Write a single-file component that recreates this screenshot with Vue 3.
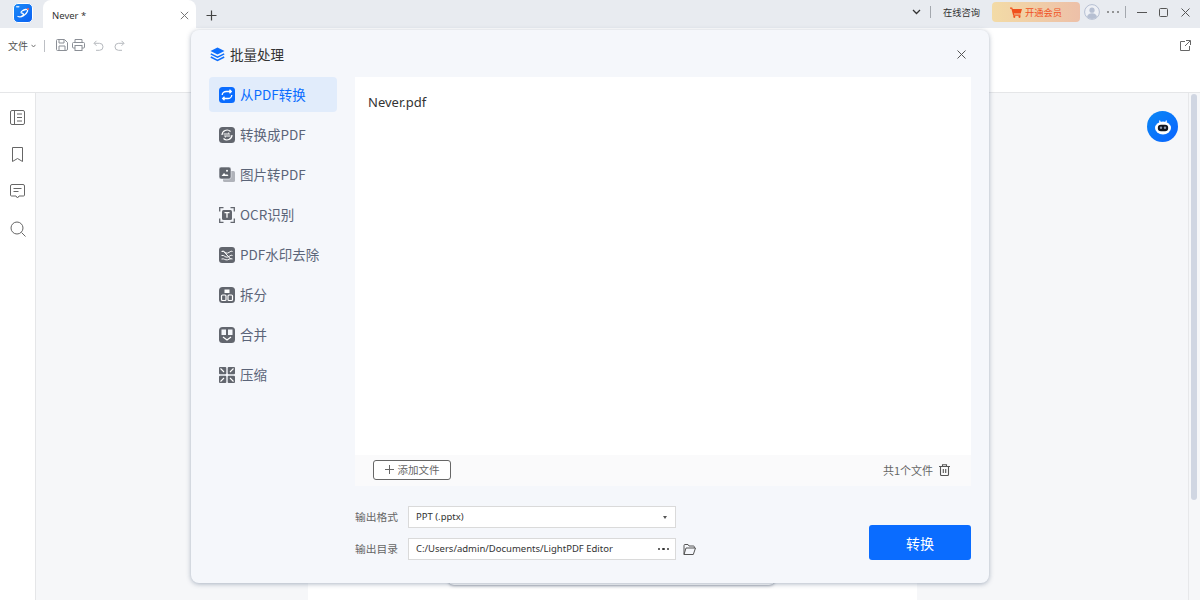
<script setup>
const navItems = [
  { label: '从PDF转换', icon: 'from', active: true },
  { label: '转换成PDF', icon: 'to' },
  { label: '图片转PDF', icon: 'img' },
  { label: 'OCR识别', icon: 'ocr' },
  { label: 'PDF水印去除', icon: 'mark' },
  { label: '拆分', icon: 'split' },
  { label: '合并', icon: 'merge' },
  { label: '压缩', icon: 'zip' }
]
</script>

<template>
  <div class="app">
    <header class="titlebar">
      <div class="logo">
        <svg width="20" height="20" viewBox="0 0 20 20">
          <defs>
            <linearGradient id="logoFill" x1="0" y1="0" x2="1" y2="1">
              <stop offset="0" stop-color="#1c8cf8" />
              <stop offset="1" stop-color="#0a5ff2" />
            </linearGradient>
          </defs>
          <rect x=".5" y=".5" width="19" height="19" rx="4.500" fill="url(#logoFill)" stroke="#fff" />
          <rect x="3" y="3" width="3.500" height="1.500" rx=".7" fill="#cfe4ff" />
          <path d="M5 13.500c3.500 1.200 8-1.500 9.500-5.300.4-1.300-.6-2-1.900-1.700-2.200.5-4.800 1.800-4.500 3 .3 1 2.400.4 2.300 1.700-.1.900-1 1.700-2.100 2.100" fill="none" stroke="#fff" stroke-width="1.300" stroke-linecap="round" />
          <circle cx="15" cy="6" r="1" fill="#f3655a" />
        </svg>
      </div>
      <div class="tab">
        <span class="tab-name">Never *</span>
        <svg class="tab-close" width="9" height="9" viewBox="0 0 9 9"><path d="M.8.8l7.400 7.400M8.200.8L.8 8.200" stroke="#777" stroke-width="1" /></svg>
      </div>
      <svg class="tab-add" width="11" height="11" viewBox="0 0 11 11"><path d="M5.500.5v10M.5 5.500h10" stroke="#444" stroke-width="1.200" /></svg>
      <div class="title-right">
        <svg class="chev" width="9" height="6" viewBox="0 0 9 6"><path d="M1 1l3.500 3.500L8 1" fill="none" stroke="#333" stroke-width="1.300" /></svg>
        <i class="vline first"></i>
        <span class="consult">在线咨询</span>
        <div class="vip">
          <svg width="12" height="11" viewBox="0 0 12 11"><path d="M0 .6h2.200l.5 1.400H12l-1.300 4.600H3.900l.3 1H10.500v1.200H3.200L1.400 1.800H0z" fill="#f0501c" /><circle cx="4.300" cy="9.800" r="1.100" fill="#f0501c" /><circle cx="9.500" cy="9.800" r="1.100" fill="#f0501c" /></svg>
          <span>开通会员</span>
        </div>
        <svg class="avatar" width="16" height="16" viewBox="0 0 16 16"><circle cx="8" cy="8" r="7.400" fill="#eef0f5" stroke="#b6bfd2" /><circle cx="8" cy="6.200" r="2.600" fill="#b6bfd2" /><path d="M3 13c.8-2.800 2.600-3.800 5-3.800s4.200 1 5 3.800a7 7 0 0 1-10 0z" fill="#b6bfd2" /></svg>
        <span class="dots"><b></b><b></b><b></b></span>
        <i class="vline second"></i>
        <svg class="win-min" width="10" height="1" viewBox="0 0 10 1"><path d="M0 .5h10" stroke="#555" /></svg>
        <svg class="win-max" width="9" height="9" viewBox="0 0 9 9"><rect x=".5" y=".5" width="8" height="8" rx="1" fill="none" stroke="#555" /></svg>
        <svg class="win-close" width="9" height="9" viewBox="0 0 9 9"><path d="M.5.500l8 8M8.500.5l-8 8" stroke="#555" /></svg>
      </div>
    </header>

    <div class="toolbar">
      <span class="file-menu">文件</span>
      <svg class="file-chev" width="5" height="4" viewBox="0 0 5 4"><path d="M.5.800L2.500 3l2-2.200" fill="none" stroke="#666" stroke-width=".9" /></svg>
      <i class="tool-line"></i>
      <svg class="t-save" width="12" height="12" viewBox="0 0 12 12"><path d="M1.500.5h7l3 3v6.500a1.500 1.500 0 0 1-1.500 1.500H1.500A1 1 0 0 1 .5 10.500v-9a1 1 0 0 1 1-1z" fill="none" stroke="#8b8f96" /><path d="M3 1v3h5V1M3 11V7h6v4" fill="none" stroke="#8b8f96" /></svg>
      <svg class="t-print" width="13" height="12" viewBox="0 0 13 12"><path d="M3 3.500V.5h7v3M3 9H1.500a1 1 0 0 1-1-1V4.500a1 1 0 0 1 1-1h10a1 1 0 0 1 1 1V8a1 1 0 0 1-1 1H10" fill="none" stroke="#8b8f96" /><rect x="3" y="6.500" width="7" height="5" fill="none" stroke="#8b8f96" /></svg>
      <svg class="t-undo" width="11" height="11" viewBox="0 0 11 11"><path d="M3.500.8L1 3.300l2.500 2.500M1.200 3.300h5.300a3.500 3.500 0 0 1 0 7H3" fill="none" stroke="#b5b8bd" /></svg>
      <svg class="t-redo" width="11" height="11" viewBox="0 0 11 11"><path d="M7.500.8L10 3.300 7.500 5.800M9.800 3.300H4.500a3.500 3.500 0 0 0 0 7H8" fill="none" stroke="#b5b8bd" /></svg>
      <svg class="t-open" width="11" height="11" viewBox="0 0 11 11"><path d="M5 1.500H.5v9h9V6M6 .5h4.500V5M10.200.8L5 6" fill="none" stroke="#666" /></svg>
    </div>

    <div class="workspace">
      <aside class="rail">
        <svg width="15" height="15" viewBox="0 0 15 15"><rect x=".5" y=".5" width="14" height="14" rx="1.500" fill="none" stroke="#666" /><path d="M4.500 1v13M7 4h5M7 7.500h5M7 11h5" stroke="#666" fill="none" /></svg>
        <svg width="15" height="15" viewBox="0 0 15 15"><path d="M2.500.5h10v14l-5-3-5 3z" fill="none" stroke="#666" /></svg>
        <svg width="15" height="15" viewBox="0 0 15 15"><path d="M2 .5h11A1.500 1.500 0 0 1 14.500 2v9a1 1 0 0 1-1 1H9l-1.500 2L6 12H1.500a1 1 0 0 1-1-1V2A1.500 1.500 0 0 1 2 .5z" fill="none" stroke="#666" /><path d="M3.500 4.500h8M3.500 7.500h5" stroke="#666" /></svg>
        <svg width="16" height="16" viewBox="0 0 16 16"><circle cx="7" cy="7" r="6" fill="none" stroke="#666" /><path d="M11.500 11.500l4 4" stroke="#666" /></svg>
      </aside>
      <main class="canvas">
        <div class="page"></div>
        <div class="float-bar"></div>
        <div class="bot">
          <svg width="18" height="17" viewBox="0 0 18 17"><path d="M6.200 4.500L5.700 3M11.800 4.500l.5-1.500" stroke="#fff" stroke-width="1.300" stroke-linecap="round" /><ellipse cx="9" cy="10" rx="8" ry="6.500" fill="#fff" /><rect x="3.800" y="6.800" width="10.400" height="6.400" rx="3.200" fill="#11151d" /><circle cx="7" cy="9.700" r="1.200" fill="#8a93a5" /><circle cx="11" cy="9.700" r="1.200" fill="#8a93a5" /></svg>
        </div>
      </main>
      <div class="scroll"><div class="thumb"></div></div>
    </div>

    <section class="modal">
      <div class="modal-head">
        <svg width="15" height="15" viewBox="0 0 15 15"><path d="M7.500.5L14.500 4l-7 3.500L.5 4z" fill="#0d6efd" /><path d="M.8 6.800l6.700 3.300 6.700-3.300M.8 10l6.700 3.500L14.200 10" fill="none" stroke="#0d6efd" stroke-width="1.500" /></svg>
        <h2>批量处理</h2>
        <svg class="modal-close" width="9" height="9" viewBox="0 0 9 9"><path d="M.5.500l8 8M8.500.5l-8 8" stroke="#555" stroke-width="1" /></svg>
      </div>
      <div class="modal-body">
        <nav class="nav">
          <div v-for="item in navItems" :key="item.label" class="nav-item" :class="{ active: item.active }">
            <svg class="nav-icon" width="16" height="16" viewBox="0 0 16 16">
              <template v-if="item.icon === 'from'">
                <rect width="16" height="16" rx="3.500" fill="#0a6cff" />
                <path d="M3.200 8a4 3.600 0 0 1 4-3.500h5M10.500 2.800L12.300 4.500 10.500 6.200M12.800 8a4 3.600 0 0 1-4 3.500h-5M5.500 9.800L3.700 11.500 5.500 13.200" fill="none" stroke="#fff" stroke-width="1.300" />
              </template>
              <template v-else-if="item.icon === 'to'">
                <rect width="16" height="16" rx="3.500" fill="#62666e" />
                <path d="M3 8a5 5 0 0 1 8.500-3.500M13 8a5 5 0 0 1-8.500 3.500" fill="none" stroke="#fff" stroke-width="1.200" />
                <path d="M4.500 7h6l-1.500-1.300M11.500 9h-6L7 10.300" fill="none" stroke="#fff" stroke-width="1" />
              </template>
              <template v-else-if="item.icon === 'img'">
                <rect x="4" y="4" width="12" height="11" rx="1.500" fill="#b0b3ba" />
                <rect width="12" height="12" rx="2" fill="#62666e" stroke="#f5f7fb" stroke-width=".6" />
                <path d="M2.500 9l2.500-3 2 2 1-1 1.500 2z" fill="#fff" />
                <circle cx="8" cy="3.700" r="1" fill="#fff" />
              </template>
              <template v-else-if="item.icon === 'ocr'">
                <path d="M.7 4.500V.7h3.800M11.500.7h3.800v3.800M.7 11.500v3.800h3.800M11.500 15.300h3.800v-3.800" fill="none" stroke="#62666e" stroke-width="1.300" />
                <rect x="3" y="3" width="10" height="10" rx="1.500" fill="#62666e" />
                <path d="M5.500 5.700h5M8 5.700v5" stroke="#fff" stroke-width="1.300" />
              </template>
              <template v-else-if="item.icon === 'mark'">
                <rect width="16" height="16" rx="3" fill="#62666e" />
                <path d="M2.500 4.500c3-.8 3.500 2.300 6 1.600s3-2.600 5-1.600M2.500 8.500c3-.8 3.500 2.300 6 1.600s3-2.600 5-1.600M2.500 12c3-.8 3.500 1.500 6 .8s3-1.800 5-.8M4 3.500l8 9" fill="none" stroke="#fff" stroke-width="1" />
              </template>
              <template v-else-if="item.icon === 'split'">
                <rect width="16" height="16" rx="3.500" fill="#62666e" />
                <rect x="5.500" y="2.500" width="5" height="3.500" fill="#fff" />
                <rect x="2.500" y="8" width="4.500" height="5.500" rx="1" fill="none" stroke="#fff" stroke-width="1.200" />
                <rect x="9" y="8" width="4.500" height="5.500" rx="1" fill="none" stroke="#fff" stroke-width="1.200" />
              </template>
              <template v-else-if="item.icon === 'merge'">
                <rect width="16" height="16" rx="3.500" fill="#62666e" />
                <rect x="2.500" y="2.500" width="4.500" height="5.500" fill="#f5f7fb" />
                <rect x="9" y="2.500" width="4.500" height="5.500" fill="#f5f7fb" />
                <path d="M4 10l4 3 4-3" fill="none" stroke="#fff" stroke-width="1.200" />
              </template>
              <template v-else>
                <rect width="7.300" height="7.300" rx="1" fill="#62666e" />
                <rect x="8.700" width="7.300" height="7.300" rx="1" fill="#62666e" />
                <rect y="8.700" width="7.300" height="7.300" rx="1" fill="#62666e" />
                <rect x="8.700" y="8.700" width="7.300" height="7.300" rx="1" fill="#62666e" />
                <path d="M1.500 1.500L5 5M14.500 1.500L11 5M1.500 14.500L5 11M14.500 14.500L11 11" stroke="#fff" stroke-width="1.100" />
              </template>
            </svg>
            <span class="nav-label">{{ item.label }}</span>
          </div>
        </nav>
        <div class="content">
          <div class="file-panel">
            <div class="file-list"><div class="file-name">Never.pdf</div></div>
            <div class="file-foot">
              <button class="add-btn">
                <svg width="9" height="9" viewBox="0 0 9 9"><path d="M4.500 0v9M0 4.500h9" stroke="#666" /></svg>
                <span>添加文件</span>
              </button>
              <div class="count">
                <span>共1个文件</span>
                <svg width="11" height="12" viewBox="0 0 11 12"><path d="M0 2.500h11M3.500 2.500V.7h4v1.800M1.500 2.500v8a1 1 0 0 0 1 1h6a1 1 0 0 0 1-1v-8M4.300 5v4M6.700 5v4" fill="none" stroke="#555" stroke-width="1.100" /></svg>
              </div>
            </div>
          </div>
          <div class="output">
            <div class="fields">
              <div class="field">
                <label>输出格式</label>
                <div class="input">
                  <span class="value">PPT (.pptx)</span>
                  <i class="caret"></i>
                </div>
              </div>
              <div class="field">
                <label>输出目录</label>
                <div class="input">
                  <span class="value">C:/Users/admin/Documents/LightPDF Editor</span>
                  <span class="more"><b></b><b></b><b></b></span>
                </div>
                <svg class="folder" width="13" height="11" viewBox="0 0 13 11"><path d="M1 10.500V1.500A1 1 0 0 1 2 .5h3l1 1.500h4.500a.8.8 0 0 1 .8.8V4M1 10.500h9.300L12.500 4H3z" fill="none" stroke="#555" /></svg>
              </div>
            </div>
            <button class="convert">转换</button>
          </div>
        </div>
      </div>
    </section>
  </div>
</template>

<style>
html, body { margin: 0; padding: 0; overflow: hidden; }
</style>

<style scoped>
* { box-sizing: border-box; }
.app {
  position: relative;
  width: 1200px;
  height: 600px;
  display: flex;
  flex-direction: column;
  overflow: hidden;
  background: #fff;
  font-family: "Noto Sans CJK SC", "Noto Sans", sans-serif;
  color: #333;
}
.titlebar {
  height: 28px;
  flex: none;
  display: flex;
  align-items: center;
  background: #e8ebf0;
  padding-left: 13px;
}
.logo { width: 20px; height: 20px; margin-top: -2px; line-height: 0; }
.tab {
  width: 153px;
  height: 28px;
  margin-left: 10px;
  background: #fff;
  border-radius: 8px 8px 0 0;
  display: flex;
  align-items: center;
  justify-content: space-between;
  padding: 2px 7px 0 9px;
  font-size: 9.500px;
  color: #333;
}
.tab-name { font-family: "Noto Sans", sans-serif; }
.tab-add { margin-left: 10px; margin-top: 2px; }
.title-right {
  margin-left: auto;
  display: flex;
  align-items: center;
  height: 100%;
  padding-right: 10px;
  padding-bottom: 4px;
}
.chev { margin-right: 9px; margin-left: 0; }
.vline { width: 1px; height: 12px; background: #a4a8ae; }
.consult { margin-left: 12px; width: 37px; font-size: 9.250px; white-space: nowrap; color: #333; }
.vip {
  margin-left: 12px;
  width: 88px;
  height: 20px;
  border-radius: 4px;
  background: linear-gradient(90deg, #f3dba6, #edc0a8);
  display: flex;
  align-items: center;
  justify-content: center;
  gap: 3px;
  color: #f0511e;
  font-size: 9.250px;
}
.avatar { margin-left: 4px; }
.dots { margin-left: 7px; display: flex; gap: 3px; }
.dots b { width: 2px; height: 2px; border-radius: 50%; background: #777; }
.vline.second { margin-left: 6px; }
.win-min { margin-left: 11px; }
.win-max { margin-left: 12px; }
.win-close { margin-left: 13px; }

.toolbar {
  height: 65px;
  flex: none;
  background: #fff;
  border-bottom: 1px solid #e5e6e8;
  display: flex;
  align-items: flex-start;
  padding: 11px 9px 0 8px;
}
.file-menu { font-size: 10px; line-height: 14px; color: #555; }
.file-chev { margin: 5px 0 0 3px; }
.tool-line { width: 1px; height: 12px; margin-top: 1px; background: #bcbfc4; margin-left: 8px; }
.t-save { margin-left: 11px; }
.t-print { margin-left: 4px; }
.t-undo { margin-left: 8px; margin-top: 1px; }
.t-redo { margin-left: 10px; margin-top: 1px; }
.t-open { margin-left: auto; margin-top: 1px; }

.workspace { flex: 1; display: flex; min-height: 0; }
.rail {
  width: 36px;
  flex: none;
  background: #fff;
  border-right: 1px solid #e5e6e8;
  display: flex;
  flex-direction: column;
  align-items: flex-start;
  padding: 17px 0 0 10px;
  gap: 22px;
}
.canvas {
  position: relative;
  flex: 1;
  background: #f6f7f9;
  border-right: 1px solid #e7e8ea;
}
.page { width: 609px; height: 560px; margin: 20px 0 0 272px; background: #fff; }
.float-bar {
  position: absolute;
  left: 412px;
  top: 440px;
  width: 327px;
  height: 52px;
  border-radius: 6px;
  background: #fff;
  box-shadow: 0 1px 3px rgba(70, 80, 100, .5);
}
.bot {
  position: absolute;
  left: 1111px;
  top: 18px;
  width: 31px;
  height: 31px;
  border-radius: 50%;
  background: linear-gradient(135deg, #0a88f5, #0a63ff);
  display: flex;
  align-items: center;
  justify-content: center;
}
.scroll { width: 11px; flex: none; background: #f6f7f9; padding: 1px 3px 0 2px; }
.thumb { height: 406px; border-radius: 4px; background: #d0d6e2; }

.modal {
  position: absolute;
  left: 191px;
  top: 30px;
  width: 798px;
  height: 553px;
  border-radius: 8px;
  background: #f5f7fb;
  box-shadow: 0 1px 5px rgba(70, 90, 120, .45);
  display: flex;
  flex-direction: column;
}
.modal-head {
  height: 47px;
  flex: none;
  display: flex;
  align-items: center;
  padding: 1px 23px 0 19px;
}
.modal-head h2 { margin: 0 0 0 5px; font-size: 13.500px; font-weight: 400; color: #333; }
.modal-close { margin-left: auto; }
.modal-body { flex: 1; display: flex; min-height: 0; padding: 0 18px 0 18px; }
.nav { width: 128px; flex: none; }
.nav-item {
  height: 35px;
  margin-bottom: 5px;
  display: flex;
  align-items: center;
  gap: 5px;
  padding: 0 10px;
  border-radius: 4px;
  font-size: 13.500px;
  color: #5b6478;
}
.nav-label { margin-top: -2px; }
.nav-item.active { background: #e1ecfb; color: #0a6cff; }
.nav-icon { flex: none; margin-top: 0; }
.content { margin-left: 18px; width: 616px; display: flex; flex-direction: column; }
.file-panel { height: 409px; flex: none; display: flex; flex-direction: column; background: #fff; }
.file-list { flex: 1; padding: 15px 13px; }
.file-name { font-size: 13px; line-height: 20px; color: #333; font-family: "Noto Sans", sans-serif; }
.file-foot {
  height: 31px;
  flex: none;
  background: #fafafb;
  display: flex;
  align-items: center;
  justify-content: space-between;
  padding: 0 21px 0 18px;
}
.add-btn {
  width: 78px;
  height: 20px;
  margin-top: -2px;
  padding: 0;
  border: 1px solid #666;
  border-radius: 3px;
  background: #fff;
  display: flex;
  align-items: center;
  justify-content: center;
  gap: 4px;
  font: 10.500px "Noto Sans CJK SC", sans-serif;
  color: #666;
}
.count { display: flex; align-items: center; gap: 6px; font-size: 11px; color: #666; margin-top: -2px; }
.output { flex: 1; display: flex; align-items: flex-start; justify-content: space-between; }
.fields { padding-top: 20px; display: flex; flex-direction: column; gap: 10px; }
.field { display: flex; align-items: center; height: 22px; position: relative; }
.field label { width: 53px; font-size: 10.750px; margin-top: -2px; color: #666; white-space: nowrap; }
.input {
  width: 268px;
  height: 22px;
  background: #fff;
  border: 1px solid #dadada;
  display: flex;
  align-items: center;
  justify-content: space-between;
  padding: 0 6px 0 7px;
  font-size: 9.500px;
  color: #333;
}
.value { font-family: "Noto Sans", sans-serif; margin-top: -1px; }
.caret { width: 0; height: 0; border: 2.500px solid transparent; border-top: 3px solid #555; border-bottom: 0; margin-right: 2px; }
.more { display: flex; gap: 2px; margin-right: 0; }
.more b { width: 2.500px; height: 2.500px; border-radius: 50%; background: #333; }
.folder { margin-left: 7px; }
.convert {
  width: 102px;
  height: 35px;
  margin-top: 39px;
  border: 0;
  border-radius: 3px;
  background: #0a6cff;
  color: #fff;
  font: 14px "Noto Sans CJK SC", sans-serif;
}
</style>
